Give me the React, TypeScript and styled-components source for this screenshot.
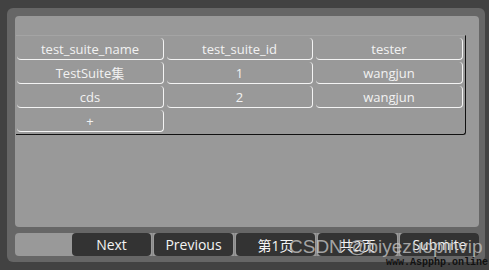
import styled, { createGlobalStyle } from "styled-components"

const GlobalStyle = createGlobalStyle`
    html, body {
        margin: 0;
        padding: 0;
        background: #424242;
        font-family: "Open Sans", "Noto Sans CJK SC", sans-serif;
    }
    #root {
        width: 489px;
        height: 270px;
        overflow: hidden;
        position: relative;
    }
`

const Frame = styled.div`
    position: relative;
    margin: 8px 0 0 7px;
    width: 478px;
    height: 254px;
    box-sizing: border-box;
    padding: 8px 6px 6px 8px;
    background: #666666;
    border-radius: 6px;
    display: flex;
    flex-direction: column;
    gap: 6px;
`

const Panel = styled.div`
    height: 211px;
    background: #999999;
    border-radius: 4px;
    padding-top: 19px;
    box-sizing: border-box;
`

const Table = styled.div`
    width: 450px;
    margin-left: 1px;
    padding: 2px 0 2px 1px;
    box-sizing: border-box;
    border-top: 1px solid #a4a4a4;
    border-right: 1px solid #111;
    border-bottom: 1px solid #111;
    border-bottom-right-radius: 3px;
    display: grid;
    grid-template-columns: 147px 146px 147px;
    grid-auto-rows: 22px;
    column-gap: 3px;
    row-gap: 2px;
`

const Cell = styled.div<{ $empty?: boolean }>`
    display: flex;
    align-items: center;
    justify-content: center;
    color: #f2f2f2;
    font-size: 13px;
    border-radius: 4px;
    border-right: ${(p) => (p.$empty ? "none" : "1.5px solid #f4f4f4")};
    border-bottom: ${(p) => (p.$empty ? "none" : "1.5px solid #f4f4f4")};
`

const BottomBar = styled.div`
    height: 23px;
    background: #999999;
    border-radius: 4px;
    display: flex;
    justify-content: flex-end;
    width: 464px;
`

const NavButton = styled.button`
    width: 79px;
    height: 23px;
    margin-left: 3px;
    border: none;
    border-radius: 4px;
    background: #333333;
    color: #f4f4f4;
    font-family: "Open Sans", "Noto Sans CJK SC", sans-serif;
    font-size: 14px;
    padding: 0;
    position: relative;

    &:not(:first-child)::before {
        content: "";
        position: absolute;
        left: -2px;
        top: 0;
        bottom: 0;
        width: 1px;
        background: #8a8a8a;
    }
`

const Watermark = styled.div`
    position: absolute;
    left: 289px;
    top: 236px;
    font-family: "Liberation Sans", sans-serif;
    font-size: 19px;
    color: rgba(195, 195, 195, 0.8);
    white-space: nowrap;
`

const SiteMark = styled.div`
    position: absolute;
    left: 386px;
    top: 257px;
    font-family: "Liberation Mono", monospace;
    font-size: 10px;
    font-weight: bold;
    color: #111;
    white-space: nowrap;
`

const rows = [
    ["test_suite_name", "test_suite_id", "tester"],
    ["TestSuite集", "1", "wangjun"],
    ["cds", "2", "wangjun"],
]

export default function App() {
    return (
        <>
            <GlobalStyle />
            <Frame>
                <Panel>
                    <Table>
                        {rows.map((row, i) =>
                            row.map((v, j) => <Cell key={`${i}-${j}`}>{v}</Cell>)
                        )}
                        <Cell>+</Cell>
                        <Cell $empty />
                        <Cell $empty />
                    </Table>
                </Panel>
                <BottomBar>
                    <NavButton>Next</NavButton>
                    <NavButton>Previous</NavButton>
                    <NavButton>第1页</NavButton>
                    <NavButton>共2页</NavButton>
                    <NavButton>Submite</NavButton>
                </BottomBar>
            </Frame>
            <Watermark>CSDN @biyezuopinvip</Watermark>
            <SiteMark>www.Aspphp.online</SiteMark>
        </>
    )
}
